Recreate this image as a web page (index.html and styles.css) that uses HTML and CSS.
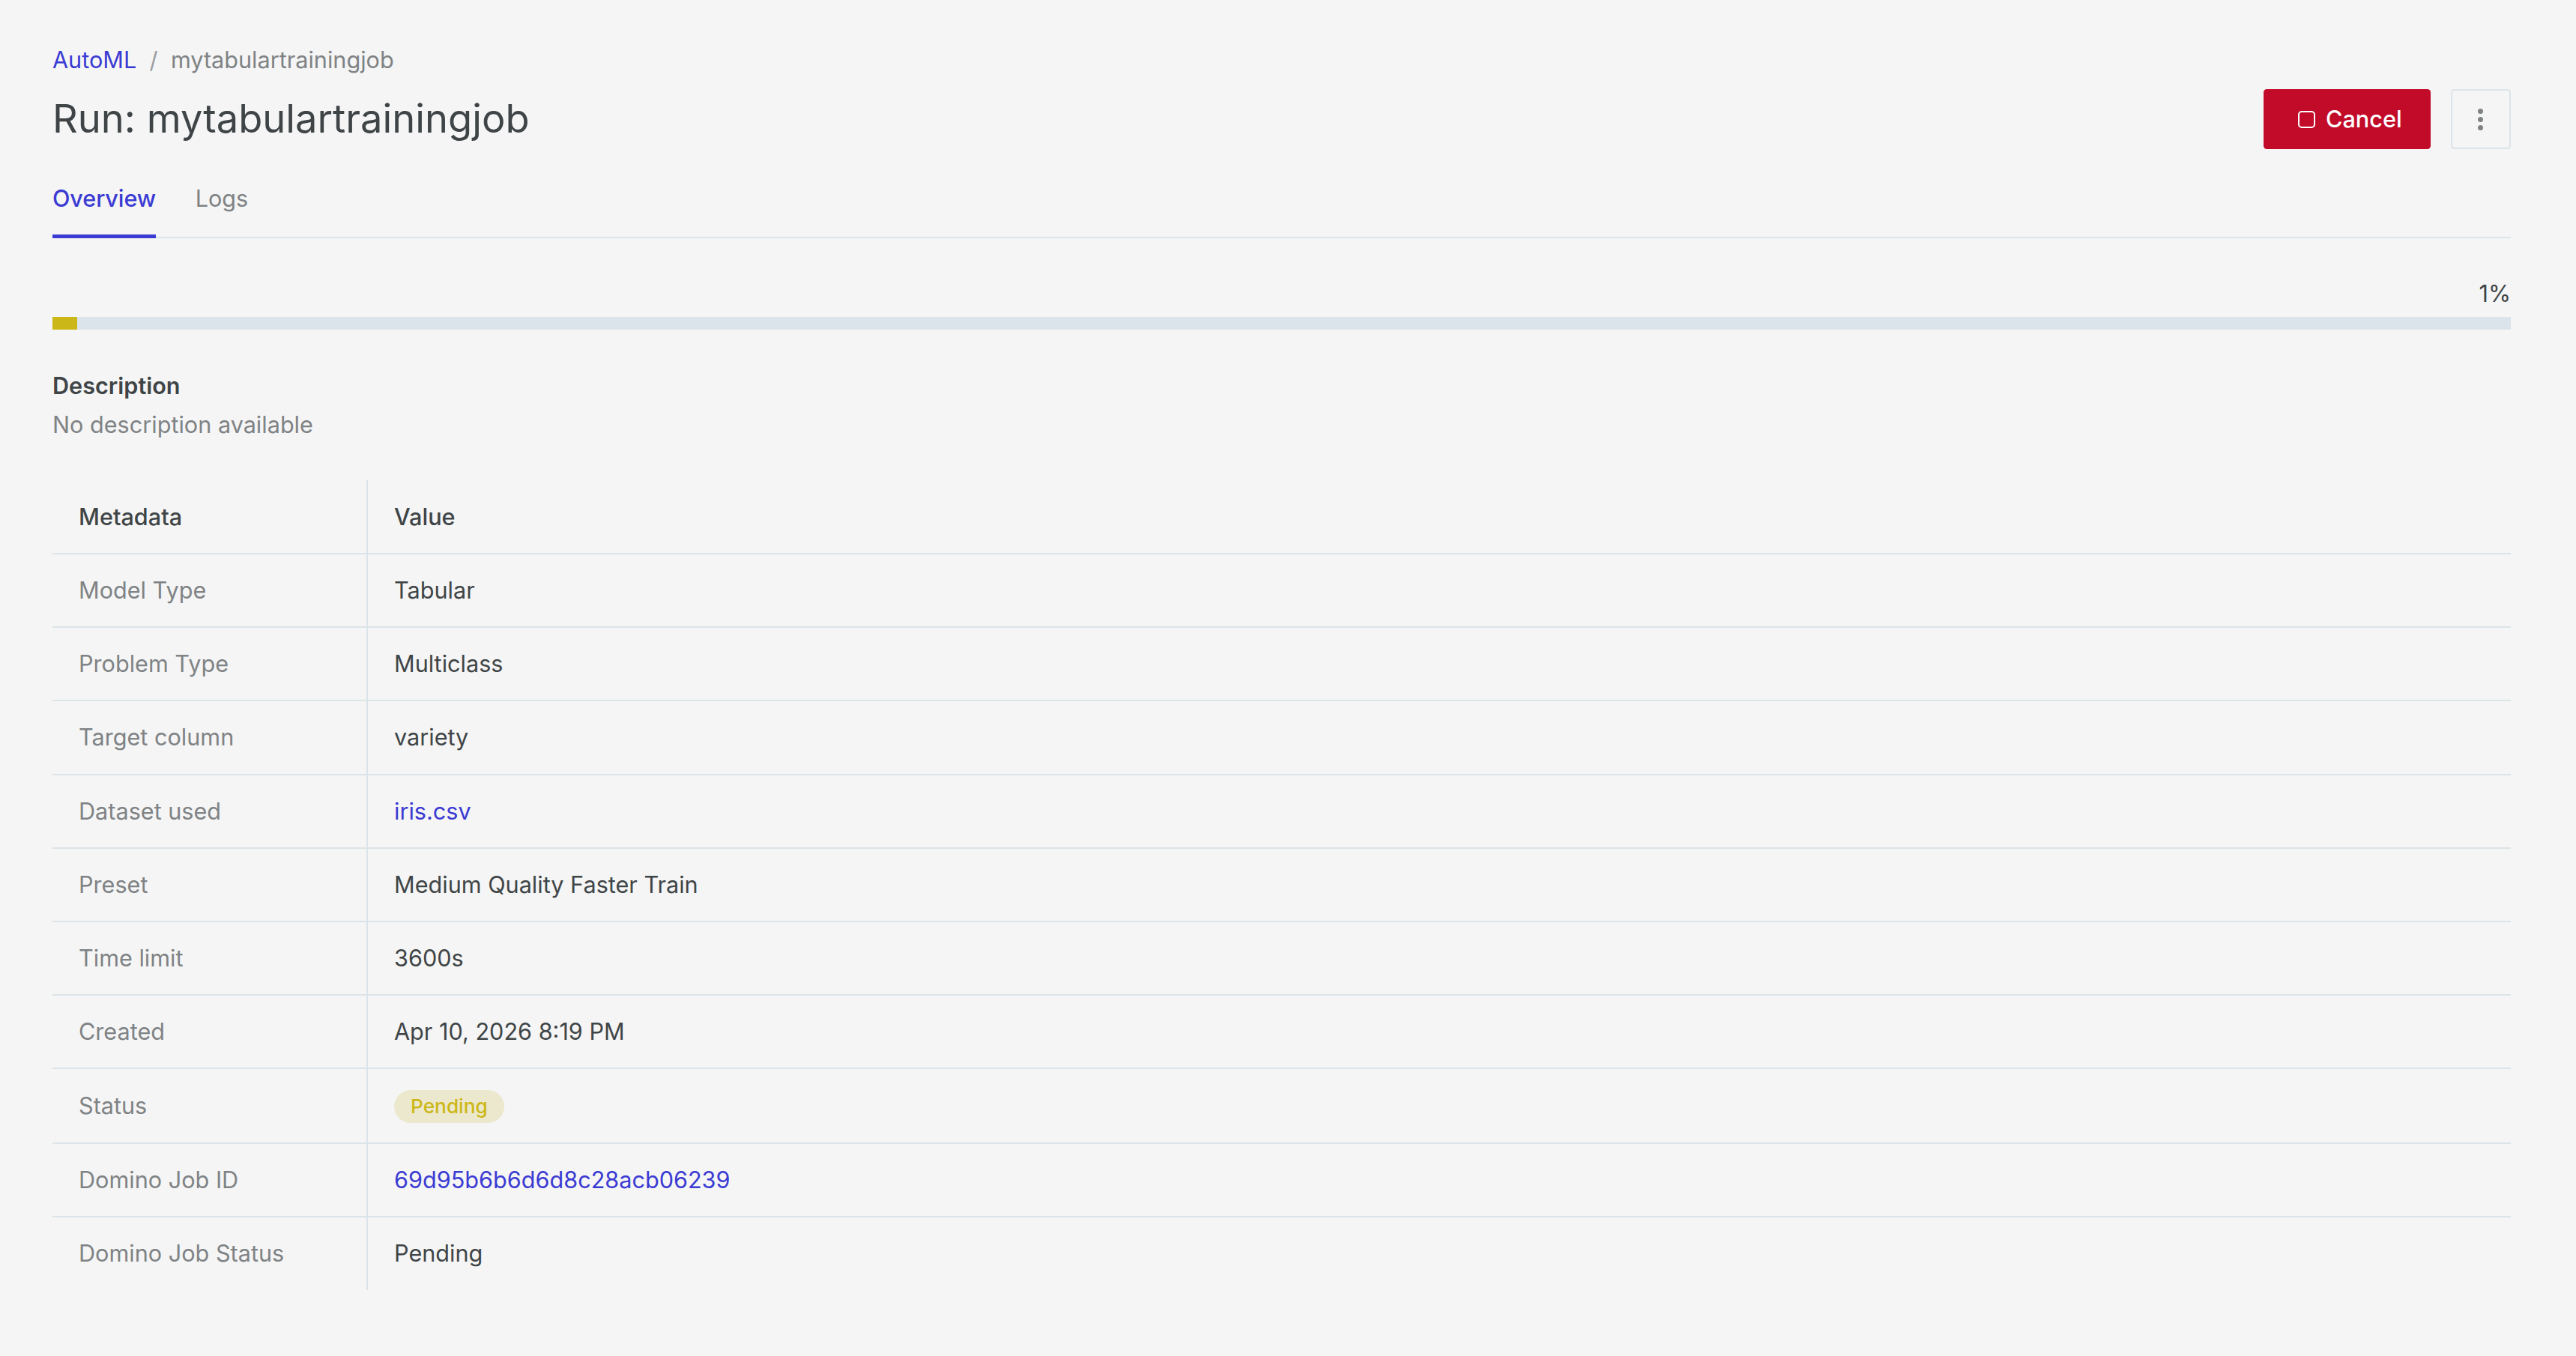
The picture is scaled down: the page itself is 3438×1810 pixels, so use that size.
FILE: index.html
```html
<!DOCTYPE html>
<html lang="en">
<head>
    <meta charset="UTF-8">
    <title>Run: mytabulartrainingjob</title>
    <link rel="stylesheet" href="styles.css">
</head>
<body>
    <nav class="breadcrumb">
        <a href="#">AutoML</a>
        <span class="separator">/</span>
        <span>mytabulartrainingjob</span>
    </nav>

    <header class="page-header">
        <h1>Run: mytabulartrainingjob</h1>
        <div class="actions">
            <button class="button-cancel">
                <svg class="icon-stop" viewBox="0 0 23 23"><rect x="1" y="1" width="21" height="21" rx="4"/></svg>
                <span>Cancel</span>
            </button>
            <button class="button-more" aria-label="More actions">
                <svg class="icon-more" viewBox="0 0 8 30"><circle cx="3.5" cy="4.5" r="3.5"/><circle cx="3.5" cy="15.5" r="3.5"/><circle cx="3.5" cy="26.5" r="3.5"/></svg>
            </button>
        </div>
    </header>

    <div class="tabs">
        <a class="tab active" href="#">Overview</a>
        <a class="tab" href="#">Logs</a>
    </div>

    <div class="progress">
        <div class="progress-label">1%</div>
        <div class="progress-track">
            <div class="progress-fill" style="width: 1%"></div>
        </div>
    </div>

    <section class="description">
        <h2>Description</h2>
        <p>No description available</p>
    </section>

    <table class="metadata">
        <thead>
            <tr><th>Metadata</th><th>Value</th></tr>
        </thead>
        <tbody>
            <tr><td>Model Type</td><td>Tabular</td></tr>
            <tr><td>Problem Type</td><td>Multiclass</td></tr>
            <tr><td>Target column</td><td>variety</td></tr>
            <tr><td>Dataset used</td><td><a href="#">iris.csv</a></td></tr>
            <tr><td>Preset</td><td>Medium Quality Faster Train</td></tr>
            <tr><td>Time limit</td><td>3600s</td></tr>
            <tr><td>Created</td><td>Apr 10, 2026 8:19 PM</td></tr>
            <tr class="status-row"><td>Status</td><td><span class="badge">Pending</span></td></tr>
            <tr><td>Domino Job ID</td><td><a href="#">69d95b6b6d6d8c28acb06239</a></td></tr>
            <tr><td>Domino Job Status</td><td>Pending</td></tr>
        </tbody>
    </table>
</body>
</html>
```
FILE: styles.css
```css
* {
    box-sizing: border-box;
}

body {
    margin: 0;
    padding: 58px 87px 0 70px;
    background: #f5f5f5;
    color: #3f4547;
    font-family: 'Inter', sans-serif;
    font-size: 30.625px;
    line-height: 44px;
}

a {
    color: #3b3bd3;
    text-decoration: none;
}

h1, h2, p {
    margin: 0;
}

.breadcrumb {
    display: flex;
    height: 44px;
    color: #7f8385;
}

.separator {
    margin: 0 17.3px;
    color: #9a9d9e;
}

.page-header {
    display: flex;
    justify-content: space-between;
    align-items: center;
    height: 80px;
    margin-top: 17px;
}

h1 {
    padding-bottom: 2px;
    font-size: 52.5px;
    font-weight: 400;
    line-height: 70px;
}

.actions {
    display: flex;
    gap: 27px;
}

button {
    display: flex;
    align-items: center;
    height: 80px;
    border-radius: 4.4px;
    font-family: inherit;
    font-size: 30.625px;
    line-height: 44px;
}

.button-cancel {
    gap: 14px;
    width: 223px;
    padding: 0 0 0 46px;
    border: none;
    background: #c20a29;
    color: white;
    font-weight: 500;
}

.icon-stop {
    width: 23px;
    height: 23px;
    fill: none;
    stroke: white;
    stroke-width: 2;
}

.button-more {
    justify-content: center;
    width: 80px;
    border: 2px solid #dbe4e8;
    background: transparent;
}

.icon-more {
    width: 8px;
    height: 30px;
    fill: #7f8385;
}

.tabs {
    display: flex;
    gap: 52.5px;
    height: 119px;
    border-bottom: 2px solid #dbe4e8;
}

.tab {
    height: 119px;
    padding-top: 44px;
    color: #7f8385;
}

.tab.active {
    border-bottom: 5px solid #3b3bd3;
    color: #3b3bd3;
    font-weight: 500;
    letter-spacing: -0.1px;
}

.progress {
    padding-top: 52px;
}

.progress-label {
    height: 53px;
    text-align: right;
}

.progress-track {
    height: 17px;
    background: #dbe4ea;
}

.progress-fill {
    height: 100%;
    background: #ccb718;
}

.description {
    padding-top: 53px;
}

.description h2 {
    font-size: 30.625px;
    font-weight: 600;
    line-height: 44px;
}

.description p {
    margin-top: 8px;
    color: #7f8385;
}

.metadata {
    width: 100%;
    margin-top: 52px;
    border-spacing: 0;
    table-layout: fixed;
}

.metadata th,
.metadata td {
    height: 98.2px;
    padding: 0 35px;
    border-bottom: 2px solid #dbe4e8;
    text-align: left;
}

.metadata th {
    height: 99px;
    font-weight: 500;
}

.metadata th:first-child,
.metadata td:first-child {
    width: 421px;
    border-right: 2px solid #dbe4e8;
}

.metadata td:first-child {
    color: #7f8385;
}

.metadata tbody tr:last-child td {
    height: 97px;
    border-bottom: none;
}

.metadata .status-row td {
    height: 99.4px;
}

.badge {
    display: inline-block;
    padding: 0 22px;
    border-radius: 22px;
    background: #ece8cd;
    color: #ccb718;
    font-size: 26.25px;
    font-weight: 500;
}
```
